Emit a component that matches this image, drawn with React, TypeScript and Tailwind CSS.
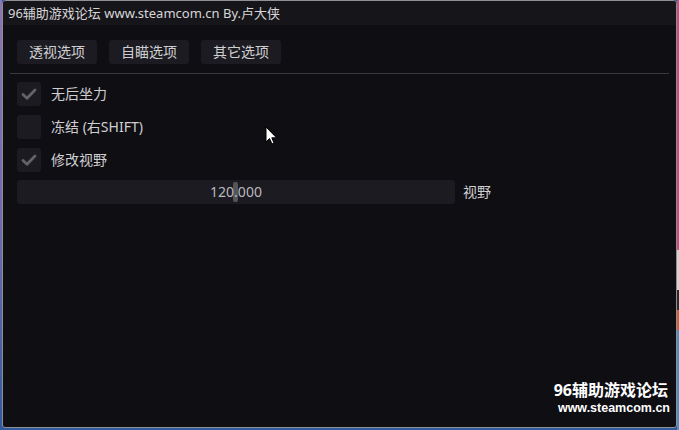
import React from "react";

const font = { fontFamily: '"Noto Sans", "Noto Sans CJK SC", sans-serif' };

function Check({ checked, label }: { checked: boolean; label: string }) {
  return (
    <div className="flex items-center h-[24px] gap-[10px]">
      <div className="w-[24px] h-[24px] rounded-[3px] bg-[#1c1b21] flex items-center justify-center">
        {checked && (
          <svg width="18" height="18" viewBox="0 0 18 18">
            <path d="M3 9.5 L7 13.2 L15 5" fill="none" stroke="#636268" strokeWidth="2.8" strokeLinecap="round" strokeLinejoin="round" />
          </svg>
        )}
      </div>
      <span className="text-[14px] text-[#cfcfd2] leading-none">{label}</span>
    </div>
  );
}

export default function App() {
  return (
    <div className="w-[679px] h-[430px] flex overflow-hidden bg-[#2f5a9e]" style={font}>
      <div className="w-[2px] h-full bg-[linear-gradient(180deg,#8a76b2_0%,#6d6aa8_55%,#2f5a9e_100%)]" />
      <div className="flex-1 flex flex-col pb-[2px] bg-[#2f5a9e]">
        <div className="relative flex-1 flex flex-col border border-[#8f8f94] rounded-tl-[4px] rounded-tr-[4px] rounded-bl-[3px] rounded-br-[3px] bg-[#0f0e13] overflow-hidden">
          <div className="h-[24px] bg-[#16151a] flex items-center pl-[5px] text-[13px] text-[#d6d6d8] leading-none">
            96辅助游戏论坛 www.steamcom.cn By.卢大侠
          </div>
          <div className="flex flex-col px-[14px]">
            <div className="flex gap-[12px] mt-[15px]">
              {["透视选项", "自瞄选项", "其它选项"].map((t) => (
                <div key={t} className="w-[80px] h-[24px] rounded-[3px] bg-[#1c1b21] flex items-center justify-center text-[14px] text-[#cfcfd2] leading-none">
                  {t}
                </div>
              ))}
            </div>
            <div className="h-px bg-[#3a393f] mt-[9px] -mx-[7px]" />
            <div className="flex flex-col gap-[9px] mt-[8px]">
              <Check checked label="无后坐力" />
              <Check checked={false} label="冻结 (右SHIFT)" />
              <Check checked label="修改视野" />
            </div>
            <div className="flex items-center mt-[8px] gap-[8px]">
              <div className="relative w-[438px] h-[24px] rounded-[3px] bg-[#1c1b21] flex items-center justify-center text-[14px] text-[#b9b9bd] leading-none">
                <div className="absolute left-[216px] top-[2px] w-[5px] h-[20px] rounded-[2px] bg-[#55545b]" />
                <span className="relative">120.000</span>
              </div>
              <span className="text-[14px] text-[#cfcfd2] leading-none">视野</span>
            </div>
          </div>
          <div className="absolute right-[6px] bottom-[13px] flex flex-col items-end text-white font-bold leading-none">
            <span className="text-[16px] mb-[4px] mr-[2px]">96辅助游戏论坛</span>
            <span className="text-[12.5px]" style={{ fontFamily: '"Liberation Sans", sans-serif' }}>www.steamcom.cn</span>
          </div>
          <svg className="absolute left-[262px] top-[125px]" width="14" height="20" viewBox="0 0 14 20">
            <path d="M1 1 L1 16 L4.5 12.5 L7 18 L9 17 L6.8 11.8 L11.5 11.8 Z" fill="#fff" stroke="#000" strokeWidth="1" />
          </svg>
        </div>
      </div>
      <div className="w-[2px] h-full flex flex-col">
        <div className="h-[250px] bg-[#c4507c]" />
        <div className="h-[40px] bg-[#d8d2cc]" />
        <div className="h-[20px] bg-[#2a2a2a]" />
        <div className="h-[20px] bg-[#d0603a]" />
        <div className="flex-1 bg-[#4a90c8]" />
      </div>
    </div>
  );
}
